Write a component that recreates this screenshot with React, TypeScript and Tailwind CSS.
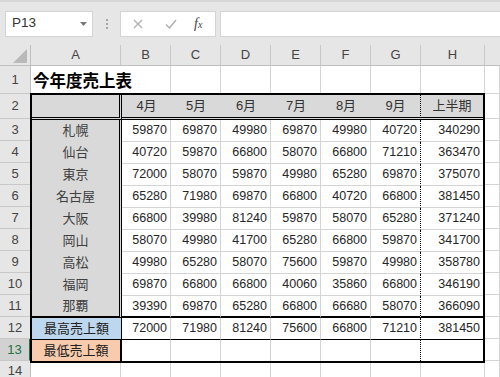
import { ReactNode } from "react"

const cols = ["A", "B", "C", "D", "E", "F", "G", "H"]
const months = ["4月", "5月", "6月", "7月", "8月", "9月"]

const sales = [
  { city: "札幌", v: [59870, 69870, 49980, 69870, 49980, 40720], total: 340290 },
  { city: "仙台", v: [40720, 59870, 66800, 58070, 66800, 71210], total: 363470 },
  { city: "東京", v: [72000, 58070, 59870, 49980, 65280, 69870], total: 375070 },
  { city: "名古屋", v: [65280, 71980, 69870, 66800, 40720, 66800], total: 381450 },
  { city: "大阪", v: [66800, 39980, 81240, 59870, 58070, 65280], total: 371240 },
  { city: "岡山", v: [58070, 49980, 41700, 65280, 66800, 59870], total: 341700 },
  { city: "高松", v: [49980, 65280, 58070, 75600, 59870, 49980], total: 358780 },
  { city: "福岡", v: [69870, 66800, 66800, 40060, 35860, 66800], total: 346190 },
  { city: "那覇", v: [39390, 69870, 65280, 66800, 66680, 58070], total: 366090 },
]
const maxRow = { v: [72000, 71980, 81240, 75600, 66800, 71210], total: 381450 }

function RowHead({ n, active }: { n: number; active?: boolean }) {
  return (
    <div
      className={
        active
          ? "flex items-center justify-center border-b border-r-2 border-b-[#c8c8c8] border-r-[#217346] bg-[#d2d2d2] text-[13px] text-[#217346]"
          : "flex items-center justify-center border-b border-r border-b-[#c8c8c8] border-r-[#bfbfbf] bg-[#e6e6e6] text-[13px] text-[#444]"
      }
    >
      {n}
    </div>
  )
}

function Blank({ className = "" }: { className?: string }) {
  return <div className={"border-b border-r border-[#d4d4d4] bg-white " + className} />
}

function Num({ value, last, bottom }: { value?: number; last?: boolean; bottom: string }) {
  return (
    <div
      className={
        "flex items-center justify-end pr-[3px] text-[12.5px] text-[#262626] " +
        (last ? "border-r border-r-black [border-right-style:dotted] " : "border-r border-r-[#d4d4d4] ") +
        bottom
      }
    >
      {value}
    </div>
  )
}

function SalesTable() {
  return (
    <div className="relative z-10 col-span-8 row-span-12 -mb-[2px] -ml-px -mt-px grid grid-cols-[90px_49px_repeat(5,50px)_1fr] grid-rows-[25px_repeat(10,22px)_1fr] border-2 border-black bg-white">
      {/* row 2 */}
      <div className="border-b-[3px] border-r-[3px] border-double border-black bg-[#d9d9d9]" />
      {months.map((m, i) => (
        <div
          key={m}
          className={
            "flex items-center justify-center border-b-[3px] border-b-black bg-[#d9d9d9] text-[13px] text-[#333] [border-bottom-style:double] " +
            (i === 5 ? "border-r border-r-black [border-right-style:dotted]" : "")
          }
        >
          {m}
        </div>
      ))}
      <div className="flex items-center justify-center border-b-[3px] border-b-black bg-[#d9d9d9] text-[13px] text-[#333] [border-bottom-style:double]">
        上半期
      </div>

      {/* rows 3-11 */}
      {sales.map((r, ri) => {
        const lastRow = ri === sales.length - 1
        const bottom = lastRow ? "border-b-2 border-b-black" : "border-b border-b-[#d4d4d4]"
        return (
          <Row key={r.city}>
            <div
              className={
                "flex items-center justify-center border-r-[3px] border-r-black bg-[#d9d9d9] text-[13px] text-[#404040] [border-right-style:double] " +
                (lastRow ? "border-b-2 border-b-black" : "")
              }
            >
              {r.city}
            </div>
            {r.v.map((v, i) => (
              <Num key={i} value={v} last={i === 5} bottom={bottom} />
            ))}
            <div className={"flex items-center justify-end pr-[3px] text-[12.5px] text-[#262626] " + bottom}>{r.total}</div>
          </Row>
        )
      })}

      {/* row 12 */}
      <div className="flex items-center justify-center border-b border-r border-black bg-[#bdd7ee] text-[13px] text-[#222]">
        最高売上額
      </div>
      {maxRow.v.map((v, i) => (
        <Num key={i} value={v} last={i === 5} bottom="border-b border-b-black" />
      ))}
      <div className="flex items-center justify-end border-b border-b-black pr-[3px] text-[12.5px] text-[#262626]">
        {maxRow.total}
      </div>

      {/* row 13 */}
      <div className="flex items-center justify-center border-r-2 border-black bg-[#f8cbad] text-[13px] text-[#222]">
        最低売上額
      </div>
      {months.map((m, i) => (
        <Num key={m} last={i === 5} bottom="" />
      ))}
      <div />
    </div>
  )
}

function Row({ children }: { children: ReactNode }) {
  return <>{children}</>
}

export default function App() {
  return (
    <div className="h-[377px] w-[500px] overflow-hidden bg-[#e6e6e6] font-['Liberation_Sans','Noto_Sans_CJK_JP',sans-serif]">
      {/* formula bar */}
      <div className="flex h-[45px] items-center border-t-2 border-[#d6d6d6] pl-[5px]">
        <div className="flex h-[26px] w-[88px] items-center justify-between border border-[#d4d4d4] bg-white pl-[6px] pr-[5px] text-[13.5px] text-[#333]">
          <span>P13</span>
          <svg width="7" height="4" viewBox="0 0 7 4">
            <path d="M0 0h7L3.5 4z" fill="#777" />
          </svg>
        </div>
        <div className="flex w-[27px] flex-col items-center gap-[2px]">
          <span className="h-[2px] w-[2px] bg-[#a6a6a6]" />
          <span className="h-[2px] w-[2px] bg-[#a6a6a6]" />
          <span className="h-[2px] w-[2px] bg-[#a6a6a6]" />
        </div>
        <div className="flex h-[26px] w-[96px] items-center border border-[#d4d4d4] bg-white">
          <svg className="ml-[12px]" width="10" height="10" viewBox="0 0 10 10">
            <path d="M1 1l8 8M9 1L1 9" stroke="#b0b0b0" strokeWidth="1.3" />
          </svg>
          <svg className="ml-[22px]" width="12" height="10" viewBox="0 0 12 10">
            <path d="M1 5.5l3.5 3.5L11 1" stroke="#b0b0b0" strokeWidth="1.5" fill="none" />
          </svg>
          <span className="ml-[17px] font-['Liberation_Serif',serif] text-[14px] italic text-[#444]">
            f<span className="text-[10px]">x</span>
          </span>
        </div>
        <div className="ml-[4px] h-[26px] flex-1 border border-r-0 border-[#d4d4d4] bg-white" />
      </div>

      {/* sheet */}
      <div className="grid h-[332px] grid-cols-[31px_90px_repeat(6,50px)_64px_1fr] grid-rows-[21px_28px_25px_repeat(11,22px)_1fr]">
        <div className="flex items-end justify-end border-b border-r border-[#bfbfbf] bg-[#e6e6e6] pb-[2px] pr-[3px]">
          <svg width="14" height="14" viewBox="0 0 14 14">
            <path d="M14 0v14H0z" fill="#b9b9b9" />
          </svg>
        </div>
        {cols.map((c) => (
          <div
            key={c}
            className="flex items-center justify-center border-b border-r border-b-[#bfbfbf] border-r-[#c8c8c8] bg-[#e6e6e6] text-[13px] text-[#444]"
          >
            {c}
          </div>
        ))}
        <div className="border-b border-b-[#bfbfbf] bg-[#e6e6e6]" />

        {/* row 1 */}
        <RowHead n={1} />
        <div className="col-span-2 flex items-center overflow-visible border-b border-r border-[#d4d4d4] bg-white pl-[2px] pt-[2px] font-['Noto_Sans_CJK_JP',sans-serif] text-[16.5px] font-bold text-black">
          今年度売上表
        </div>
        <Blank />
        <Blank />
        <Blank />
        <Blank />
        <Blank />
        <Blank />
        <Blank />

        {/* rows 2-13 */}
        <RowHead n={2} />
        <SalesTable />
        <Blank />
        {[3, 4, 5, 6, 7, 8, 9, 10, 11, 12, 13].map((n) => (
          <Row key={n}>
            <RowHead n={n} active={n === 13} />
            <Blank />
          </Row>
        ))}

        {/* row 14 */}
        <RowHead n={14} />
        {cols.map((c) => (
          <Blank key={c} />
        ))}
        <Blank />
      </div>
    </div>
  )
}
